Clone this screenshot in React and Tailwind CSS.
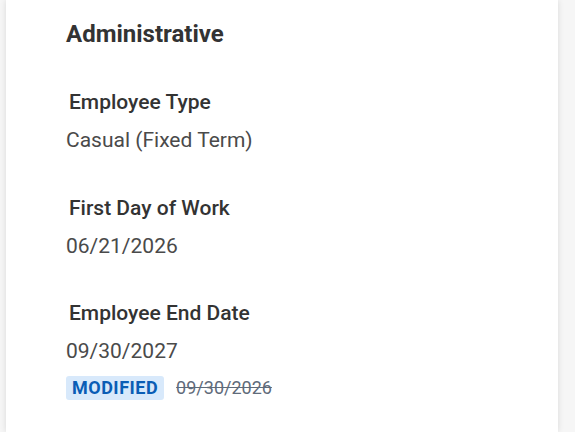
import React from "react";

const fields = [
  { label: "Employee Type", value: "Casual (Fixed Term)" },
  { label: "First Day of Work", value: "06/21/2026" },
  {
    label: "Employee End Date",
    value: "09/30/2027",
    modified: true,
    previous: "09/30/2026",
  },
];

const App = () => {
  return (
    <div
      className="min-h-[432px] bg-[#f6f6f6] overflow-hidden"
      style={{ fontFamily: "Roboto, 'Noto Sans', sans-serif" }}
    >
      <div className="ml-[6px] w-[552px] min-h-[432px] bg-white shadow-[0_0_6px_rgba(0,0,0,0.12)] pl-[60px] pt-[19px]">
        <h2 className="text-[24px] leading-[30px] font-bold text-[#333333]">
          Administrative
        </h2>

        <div className="mt-[40px] flex flex-col gap-[41.5px]">
          {fields.map((field) => (
            <div key={field.label}>
              <p className="pl-[3px] text-[21px] leading-[26px] font-medium text-[#333333]">
                {field.label}
              </p>
              <p className="mt-[12px] text-[21px] leading-[26px] text-[#4a4a4a]">
                {field.value}
              </p>
              {field.modified && (
                <div className="mt-[12px] flex items-center gap-[12px]">
                  <span className="rounded-[3px] bg-[#d8e9fb] px-[6px] text-[18px] leading-[24px] font-bold tracking-[0.5px] text-[#0a5db5]">
                    MODIFIED
                  </span>
                  <span className="text-[18px] leading-[24px] text-[#5f6b7a] line-through">
                    {field.previous}
                  </span>
                </div>
              )}
            </div>
          ))}
        </div>
      </div>
    </div>
  );
};

export default App;
